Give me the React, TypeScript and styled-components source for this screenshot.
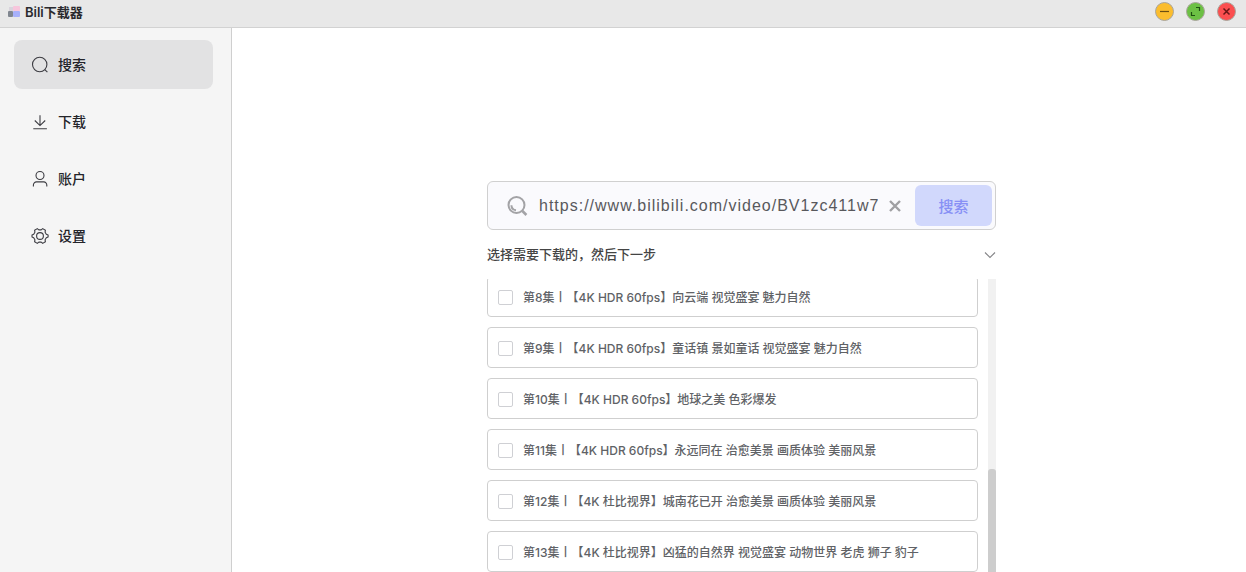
import React, { useState } from "react";
import styled, { createGlobalStyle } from "styled-components";

const GlobalStyle = createGlobalStyle`
  *, *::before, *::after { box-sizing: border-box; }
  body {
    margin: 0;
    background: #fff;
    font-family: Inter, "Noto Sans CJK SC", sans-serif;
    color: #24242a;
  }
  button, input { font: inherit; color: inherit; }
`;

const Window = styled.div`
  display: flex;
  flex-direction: column;
  height: 100vh;
  overflow: hidden;
`;

const TitleBar = styled.header`
  flex: none;
  display: flex;
  align-items: center;
  justify-content: space-between;
  height: 28px;
  padding: 0 10px 4px 8px;
  background: #e8e8e8;
  border-bottom: 1px solid #d2d2d2;
`;

const Brand = styled.div`
  display: flex;
  align-items: center;
  gap: 5px;
  font-size: 13px;
  line-height: 20px;
  font-weight: 600;
  color: #2a2a2e;
`;

const WindowControls = styled.div`
  display: flex;
  gap: 12px;
`;

const ControlButton = styled.button<{ $color: string }>`
  display: flex;
  width: 19px;
  height: 19px;
  padding: 0;
  align-items: center;
  justify-content: center;
  border: 1px solid #a9a59c;
  border-radius: 50%;
  background: ${(p) => p.$color};
`;

const Body = styled.div`
  flex: 1;
  display: flex;
  min-height: 0;
`;

const Sidebar = styled.nav`
  flex: none;
  display: flex;
  flex-direction: column;
  gap: 8px;
  width: 232px;
  padding: 12px 18px 12px 14px;
  background: #f5f5f5;
  border-right: 1px solid #cfcfcf;
`;

const NavItem = styled.a<{ $active?: boolean }>`
  display: flex;
  align-items: center;
  gap: 9px;
  height: 49px;
  padding: 0 17px;
  border-radius: 8px;
  background: ${(p) => (p.$active ? "#e2e2e3" : "transparent")};
  color: #24242a;
  font-size: 14px;
  line-height: 20px;
  font-weight: 500;
  text-decoration: none;
`;

const Main = styled.main`
  flex: 1;
  display: flex;
  justify-content: center;
  min-width: 0;
  padding: 153px 0 0 5px;
`;

const Column = styled.div`
  display: flex;
  flex-direction: column;
  width: 100%;
  max-width: 509px;
  min-height: 0;
`;

const SearchBox = styled.form`
  flex: none;
  display: flex;
  align-items: center;
  height: 49px;
  padding: 0 3px 0 18px;
  border: 1px solid #d0d0d0;
  border-radius: 6px;
  background: #fafafd;
`;

const UrlInput = styled.input`
  flex: 1;
  min-width: 0;
  height: 30px;
  margin-left: 11px;
  padding: 0;
  border: 0;
  outline: 0;
  background: transparent;
  font-family: "Liberation Sans", sans-serif;
  font-size: 16px;
  letter-spacing: 1px;
  color: #58585c;
`;

const ClearButton = styled.button`
  display: flex;
  align-items: center;
  width: 37px;
  height: 30px;
  padding: 0 0 0 11px;
  border: 0;
  background: none;
`;

const SubmitButton = styled.button`
  width: 77px;
  height: 41px;
  padding: 0;
  border: 0;
  border-radius: 6px;
  background: #d1d8fc;
  color: #8790f5;
  font-size: 15px;
  font-weight: 500;
`;

const SectionToggle = styled.button`
  flex: none;
  display: flex;
  align-items: center;
  justify-content: space-between;
  height: 49px;
  padding: 0;
  border: 0;
  background: none;
  font-family: "Liberation Sans", "Noto Sans CJK SC", sans-serif;
  font-size: 13px;
  line-height: 20px;
  font-weight: 500;
  color: #444;
`;

const ScrollArea = styled.div`
  flex: 1;
  display: flex;
  gap: 10px;
  min-height: 0;
`;

const EpisodeList = styled.ul`
  flex: 1;
  display: flex;
  flex-direction: column;
  justify-content: flex-end;
  gap: 10px;
  min-width: 0;
  margin: 0;
  padding: 0;
  overflow: hidden;
  list-style: none;
`;

const Episode = styled.li`
  flex: none;
`;

const EpisodeLabel = styled.label`
  display: flex;
  align-items: center;
  gap: 10px;
  height: 41px;
  padding: 2px 10px 0;
  border: 1px solid #cfcfcf;
  border-radius: 4px;
  background: #fff;
  color: #606266;
  font-size: 12px;
  line-height: 20px;
  font-weight: 500;
  white-space: nowrap;
`;

const Checkbox = styled.input`
  appearance: none;
  flex: none;
  width: 15px;
  height: 15px;
  margin: 0;
  border: 1px solid #cfd0d4;
  border-radius: 2px;
  background: #fff;
  &:checked { background: #8790f5; }
`;

const ScrollTrack = styled.div`
  flex: none;
  display: flex;
  flex-direction: column;
  justify-content: flex-end;
  width: 8px;
  background: #f1f1f1;
`;

const ScrollThumb = styled.div`
  height: 35%;
  border-radius: 3px 3px 0 0;
  background: #cdcdcd;
`;

const Logo = () => (
  <svg width="12" height="12" viewBox="0 0 12 12" aria-hidden="true">
    <rect x="1" y="1" width="4" height="4" fill="#d9d4dd" />
    <rect x="5" y="0" width="7" height="5" rx="1" fill="#f7c6dc" />
    <rect x="0" y="5" width="5" height="6" rx="1" fill="#80868f" />
    <rect x="5" y="5" width="7" height="6" rx="1" fill="#a7b0fa" />
  </svg>
);

const NavIcon = ({ children }: { children: React.ReactNode }) => (
  <svg width="18" height="18" viewBox="0 0 18 18" fill="none" stroke="#3c3c42" strokeWidth="1.1" aria-hidden="true">
    {children}
  </svg>
);

const navItems = [
  {
    label: "搜索",
    icon: (
      <>
        <circle cx="8.7" cy="8.5" r="7.2" />
        <path d="M13.8 13.6l2.6 2.6" />
      </>
    ),
  },
  {
    label: "下载",
    icon: <path d="M9 2.3v10M3.8 7.5L9 12.6l5.2-5.1M2.3 15.7h13.6" />,
  },
  {
    label: "账户",
    icon: (
      <>
        <circle cx="9" cy="5.5" r="4" />
        <path d="M2.4 16.5v-1.6a3 3 0 0 1 3-3h7.4a3 3 0 0 1 3 3v1.6" />
      </>
    ),
  },
  {
    label: "设置",
    icon: (
      <>
        <circle cx="9" cy="9" r="3.4" />
        <path
          strokeLinejoin="round"
          d="M6.3 1.6l1.5 1.3h2.4l1.5-1.3 2.7 1.6-.3 2 1.2 2 1.8.8v2l-1.8.8-1.2 2 .3 2-2.7 1.6-1.5-1.3H7.8l-1.5 1.3-2.7-1.6.3-2-1.2-2L1 10V8l1.7-.8 1.2-2-.3-2z"
        />
      </>
    ),
  },
];

const episodes = [
  "第8集丨【4K HDR 60fps】向云端 视觉盛宴 魅力自然",
  "第9集丨【4K HDR 60fps】童话镇 景如童话 视觉盛宴 魅力自然",
  "第10集丨【4K HDR 60fps】地球之美 色彩爆发",
  "第11集丨【4K HDR 60fps】永远同在 治愈美景 画质体验 美丽风景",
  "第12集丨【4K 杜比视界】城南花已开 治愈美景 画质体验 美丽风景",
  "第13集丨【4K 杜比视界】凶猛的自然界 视觉盛宴 动物世界 老虎 狮子 豹子",
];

export default function App() {
  const [url, setUrl] = useState("https://www.bilibili.com/video/BV1zc411w7rR");

  return (
    <Window>
      <GlobalStyle />
      <TitleBar>
        <Brand>
          <Logo />
          <span>Bili下载器</span>
        </Brand>
        <WindowControls>
          <ControlButton type="button" $color="#fbbd2e" aria-label="最小化">
            <svg width="11" height="11" viewBox="0 0 11 11" stroke="#6b4e12" strokeWidth="1.2">
              <path d="M1 5.5h9" />
            </svg>
          </ControlButton>
          <ControlButton type="button" $color="#6cc044" aria-label="最大化">
            <svg width="11" height="11" viewBox="0 0 11 11" fill="none" stroke="#1f5212" strokeWidth="1.2">
              <path d="M6 1.5h3.5V5M1.5 6v3.5H5" />
            </svg>
          </ControlButton>
          <ControlButton type="button" $color="#fb4f50" aria-label="关闭">
            <svg width="11" height="11" viewBox="0 0 11 11" stroke="#6a1515" strokeWidth="1.5">
              <path d="M2.5 2.5l6 6M8.5 2.5l-6 6" />
            </svg>
          </ControlButton>
        </WindowControls>
      </TitleBar>
      <Body>
        <Sidebar>
          {navItems.map((item, i) => (
            <NavItem key={item.label} href="#" $active={i === 0}>
              <NavIcon>{item.icon}</NavIcon>
              {item.label}
            </NavItem>
          ))}
        </Sidebar>
        <Main>
          <Column>
            <SearchBox onSubmit={(e) => e.preventDefault()}>
              <svg width="22" height="22" viewBox="0 0 22 22" fill="none" stroke="#a3a3a6" aria-hidden="true">
                <circle cx="10.5" cy="10" r="8" strokeWidth="2" />
                <path d="M16.4 16l4 4" strokeWidth="2.6" />
                <path d="M5.4 10.2a5.2 5.2 0 0 0 4.6 5" strokeWidth="2" />
              </svg>
              <UrlInput aria-label="视频链接" value={url} onChange={(e) => setUrl(e.target.value)} />
              <ClearButton type="button" aria-label="清空" onClick={() => setUrl("")}>
                <svg width="12" height="12" viewBox="0 0 12 12" stroke="#a0a0a3" strokeWidth="2.4">
                  <path d="M1 1l10 10M11 1L1 11" />
                </svg>
              </ClearButton>
              <SubmitButton type="submit">搜索</SubmitButton>
            </SearchBox>
            <SectionToggle type="button">
              选择需要下载的，然后下一步
              <svg width="12" height="12" viewBox="0 0 12 12" fill="none" stroke="#858588" strokeWidth="1.1">
                <path d="M1 3.5l5 5 5-5" />
              </svg>
            </SectionToggle>
            <ScrollArea>
              <EpisodeList>
                {episodes.map((title) => (
                  <Episode key={title}>
                    <EpisodeLabel>
                      <Checkbox type="checkbox" />
                      {title}
                    </EpisodeLabel>
                  </Episode>
                ))}
              </EpisodeList>
              <ScrollTrack>
                <ScrollThumb />
              </ScrollTrack>
            </ScrollArea>
          </Column>
        </Main>
      </Body>
    </Window>
  );
}
